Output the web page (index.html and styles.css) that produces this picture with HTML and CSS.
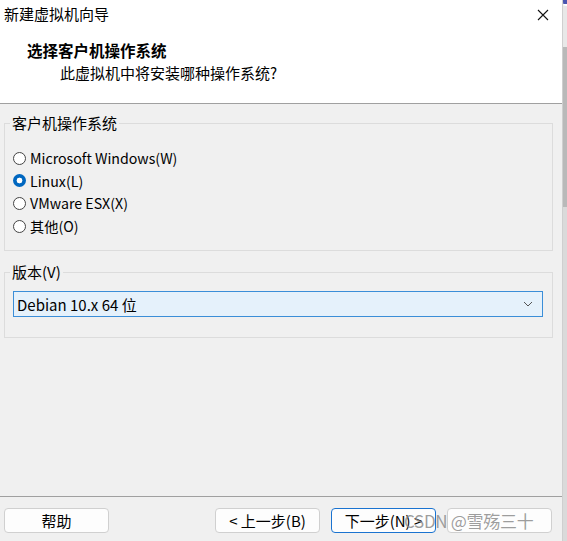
FILE: index.html
```html
<!DOCTYPE html>
<html lang="zh-CN">
<head>
<meta charset="utf-8">
<title>新建虚拟机向导</title>
<link rel="stylesheet" href="styles.css">
</head>
<body>
<div class="screen">
  <div class="window">
    <div class="titlebar">
      <span class="title">新建虚拟机向导</span>
      <svg class="close" width="12" height="12" viewBox="0 0 12 12"><path d="M1 1 L11 11 M11 1 L1 11" stroke="#111" stroke-width="1.1" fill="none"/></svg>
    </div>
    <div class="header">
      <div class="heading">选择客户机操作系统</div>
      <div class="subtitle">此虚拟机中将安装哪种操作系统?</div>
    </div>
    <div class="body">
      <fieldset class="group group-os">
        <legend>客户机操作系统</legend>
        <div class="radio-row"><span class="radio"></span><span>Microsoft Windows(W)</span></div>
        <div class="radio-row"><span class="radio checked"></span><span>Linux(L)</span></div>
        <div class="radio-row"><span class="radio"></span><span>VMware ESX(X)</span></div>
        <div class="radio-row"><span class="radio"></span><span>其他(O)</span></div>
      </fieldset>
      <fieldset class="group group-ver">
        <legend>版本(V)</legend>
        <div class="select">
          <span>Debian 10.x 64 位</span>
          <svg class="chev" width="10" height="6" viewBox="0 0 10 6"><path d="M1 1 L5 5 L9 1" stroke="#555" stroke-width="1" fill="none"/></svg>
        </div>
      </fieldset>
    </div>
    <div class="footer">
      <button class="btn">帮助</button>
      <div class="spacer"></div>
      <button class="btn">&lt; 上一步(B)</button>
      <button class="btn btn-primary">下一步(N) &gt;</button>
      <button class="btn btn-cancel" aria-label="取消"></button>
      <div class="watermark">CSDN @雪殇三十</div>
    </div>
  </div>
  <div class="strip">
    <div class="strip-top"></div>
    <div class="strip-a"></div>
    <div class="strip-b"></div>
    <div class="strip-c"></div>
  </div>
</div>
</body>
</html>
```
FILE: styles.css
```css
* { box-sizing: border-box; }
html, body { margin: 0; padding: 0; }
body {
  width: 567px;
  height: 541px;
  overflow: hidden;
  font-family: "Noto Sans CJK SC", "Noto Sans", sans-serif;
  font-size: 15px;
  color: #000;
  background: #f0f0f0;
}
.screen { display: flex; width: 567px; height: 541px; }
.window {
  width: 562px;
  height: 541px;
  display: flex;
  flex-direction: column;
  background: #f0f0f0;
  position: relative;
}
.titlebar {
  height: 30px;
  background: #fff;
  display: flex;
  align-items: center;
  justify-content: space-between;
  padding: 0 13px 2px 4px;
}
.title { font-size: 15px; line-height: 20px; }
.close { display: block; margin-top: 1px; }
.header {
  height: 74px;
  background: #fff;
  border-bottom: 1px solid #a0a0a0;
  padding-top: 10px;
}
.heading { font-weight: bold; padding-left: 27px; line-height: 20px; font-size: 15.5px; }
.subtitle { padding-left: 60px; line-height: 20px; margin-top: 3px; }
.body {
  flex: 1;
  padding: 9px 9px 0 4px;
}
.group {
  margin: 0;
  border: 1px solid #dcdcdc;
  padding: 0 5px;
}
.group legend {
  padding: 0 2px;
  line-height: 20px;
  font-size: 15px;
}
.group-os { padding-top: 14px; padding-bottom: 13px; }
.group-ver { margin-top: 11px; padding-top: 9px; padding-bottom: 20px; }
.radio-row {
  height: 22.6px;
  display: flex;
  align-items: center;
  padding-left: 3px;
  gap: 4px;
  font-size: 14.2px;
}
.radio {
  width: 13px;
  height: 13px;
  border-radius: 50%;
  border: 1px solid #444;
  background: #fff;
  flex: none;
}
.radio.checked {
  border: none;
  background: radial-gradient(circle, #fff 0 2.6px, #0067c0 3.2px);
}
.select {
  margin: 0 4px 0 3px;
  height: 26px;
  border: 1px solid #3b8ed8;
  background: #e5f1fb;
  display: flex;
  align-items: center;
  justify-content: space-between;
  padding: 0 9px 0 3px;
}
.footer {
  height: 45px;
  border-top: 1px solid #a0a0a0;
  display: flex;
  align-items: flex-start;
  padding: 11px 10px 0 4px;
  position: relative;
}
.spacer { flex: 1; }
.btn {
  width: 105px;
  height: 25px;
  font-family: inherit;
  font-size: 15px;
  color: #000;
  background: #fdfdfd;
  border: 1px solid #d0d0d0;
  border-radius: 4px;
  padding: 0;
  line-height: 20px;
}
.btn + .btn { margin-left: 11px; }
.btn-primary { border-color: #1a73d0; }
.watermark {
  position: absolute;
  left: 404px;
  top: 13px;
  font-size: 17px;
  line-height: 22px;
  color: rgba(140,140,140,0.85);
  white-space: nowrap;
  letter-spacing: -0.3px;
}
.strip {
  width: 5px;
  height: 541px;
  display: flex;
  flex-direction: column;
  border-left: 1px solid #cfcfcf;
}
.strip-top { height: 6px; background: #fff; border-top: 4px solid #4a55b0; border-radius: 0 0 0 4px; }
.strip-a { height: 41px; background: #e8e8e8; }
.strip-b { height: 160px; background: #b9b9b9; }
.strip-c { flex: 1; background: #dadada; }
```
